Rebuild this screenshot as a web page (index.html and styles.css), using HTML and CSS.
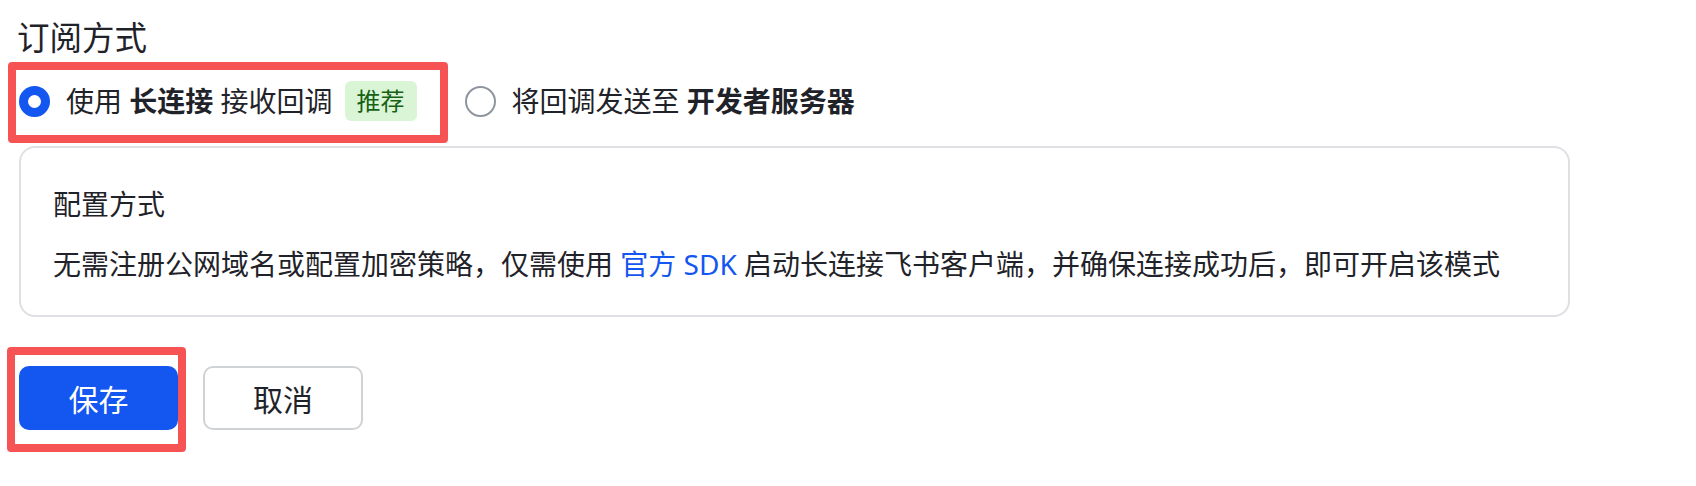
FILE: index.html
```html
<!DOCTYPE html>
<html>
<head>
  <title>订阅方式</title>
  <meta name="viewport" content="width=device-width, initial-scale=1.0">
  <link rel="stylesheet" href="styles.css">
</head>
<body>
  <div class="page">
    <h2 class="section-title">订阅方式</h2>

    <div class="radio-group">
      <label class="radio-item checked marked">
        <span class="radio"></span>
        <span class="radio-label">使用 <strong>长连接</strong> 接收回调</span>
        <span class="tag">推荐</span>
      </label>
      <label class="radio-item">
        <span class="radio"></span>
        <span class="radio-label">将回调发送至 <strong>开发者服务器</strong></span>
      </label>
    </div>

    <div class="config-box">
      <div class="config-title">配置方式</div>
      <p class="config-desc">无需注册公网域名或配置加密策略，仅需使用 <a href="#">官方 SDK</a> 启动长连接飞书客户端，并确保连接成功后，即可开启该模式</p>
    </div>

    <div class="actions">
      <span class="btn-wrap marked"><button class="btn btn-primary">保存</button></span>
      <button class="btn">取消</button>
    </div>
  </div>
</body>
</html>
```

FILE: styles.css
```css
:root {
  --text: #1f2329;
  --primary: #1456f0;
  --border: #dee0e3;
  --mark: #f65354;
}

* {
  margin: 0;
  padding: 0;
  box-sizing: border-box;
}

html, body {
  min-height: 486px;
}

body {
  font-family: "Noto Sans", "Noto Sans CJK SC", sans-serif;
  color: var(--text);
  background: #fff;
}

.page {
  padding: 16px 0 56px 19px;
  width: 1570px;
  min-height: 486px;
}

.section-title {
  font-size: 32.5px;
  font-weight: 400;
  line-height: 44px;
  margin-left: -2px;
}

.radio-group {
  display: flex;
  align-items: center;
  height: 44px;
  margin-top: 19px;
}

.radio-item {
  display: flex;
  align-items: center;
  position: relative;
  font-size: 28px;
  line-height: 44px;
  cursor: pointer;
}

.radio-item + .radio-item {
  margin-left: 48px;
}

.radio {
  width: 31px;
  height: 31px;
  border-radius: 50%;
  border: 2px solid #8f959e;
  margin-right: 16px;
  flex-shrink: 0;
}

.radio-item.checked .radio {
  border: 9.5px solid var(--primary);
  background: #fff;
}

.radio-label strong {
  font-weight: 700;
}

.tag {
  margin-left: 12px;
  height: 40px;
  line-height: 40px;
  padding: 0 12px;
  font-size: 24px;
  border-radius: 6px;
  background: #d9f5d6;
  color: #186014;
}

/* red annotation frames */
.marked::after {
  content: '';
  position: absolute;
  border: 8px solid var(--mark);
  border-radius: 4px;
  pointer-events: none;
}

.radio-item.marked::after {
  top: -17px;
  right: -31px;
  bottom: -20px;
  left: -11px;
}

.config-box {
  margin-top: 23px;
  border: 2px solid var(--border);
  border-radius: 16px;
  padding: 34px 32px 29px;
}

.config-title {
  font-size: 28px;
  line-height: 44px;
}

.config-desc {
  margin-top: 16px;
  font-size: 28px;
  line-height: 44px;
}

.config-desc a {
  color: var(--primary);
  text-decoration: none;
}

.actions {
  display: flex;
  gap: 25px;
  margin-top: 49px;
}

.btn-wrap {
  position: relative;
  display: flex;
}

.btn-wrap.marked::after {
  top: -19px;
  right: -8px;
  bottom: -22px;
  left: -12px;
}

.btn {
  width: 160px;
  height: 64px;
  font-family: inherit;
  font-size: 30px;
  color: var(--text);
  background: #fff;
  border: 2px solid #d0d3d6;
  border-radius: 10px;
  cursor: pointer;
}

.btn-primary {
  width: 159px;
  color: #fff;
  background: var(--primary);
  border-color: var(--primary);
}
```
